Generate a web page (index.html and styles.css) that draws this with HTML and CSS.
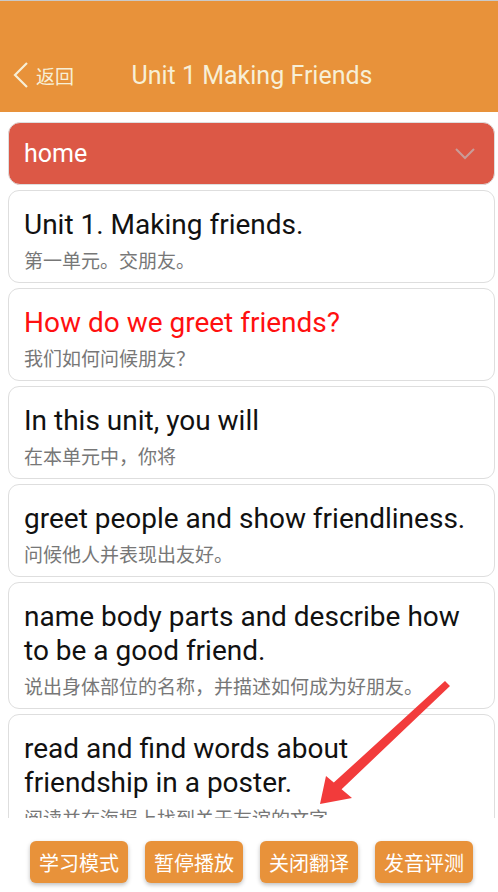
FILE: index.html
```html
<!DOCTYPE html>
<html lang="zh-CN">
  <head>
    <meta charset="UTF-8" />
    <meta name="viewport" content="width=device-width, initial-scale=1.0" />
    <title>Unit 1 Making Friends</title>
    <link rel="stylesheet" href="styles.css">
  </head>
  <body>
    <header class="topbar">
      <div class="nav">
        <a class="back" href="#">
          <svg width="16" height="28" viewBox="0 0 16 28">
            <path d="M14 2 L2 14 L14 26" fill="none" stroke="#f7efd6" stroke-width="2.2" />
          </svg>
          <span>返回</span>
        </a>
        <h1 class="title">Unit 1 Making Friends</h1>
        <span></span>
      </div>
    </header>

    <main class="list">
      <div class="picker">
        <span>home</span>
        <svg width="20" height="12" viewBox="0 0 20 12">
          <path d="M1 1 L10 10 L19 1" fill="none" stroke="#c99c98" stroke-width="2" />
        </svg>
      </div>

      <div class="card">
        <p class="en">Unit 1. Making friends.</p>
        <p class="cn">第一单元。交朋友。</p>
      </div>
      <div class="card">
        <p class="en red">How do we greet friends?</p>
        <p class="cn">我们如何问候朋友？</p>
      </div>
      <div class="card">
        <p class="en">In this unit, you will</p>
        <p class="cn">在本单元中，你将</p>
      </div>
      <div class="card">
        <p class="en">greet people and show friendliness.</p>
        <p class="cn">问候他人并表现出友好。</p>
      </div>
      <div class="card">
        <p class="en">name body parts and describe how to be a good friend.</p>
        <p class="cn">说出身体部位的名称，并描述如何成为好朋友。</p>
      </div>
      <div class="card">
        <p class="en">read and find words about friendship in a poster.</p>
        <p class="cn">阅读并在海报上找到关于友谊的文字。</p>
      </div>
    </main>

    <footer class="actions">
      <button>学习模式</button>
      <button>暂停播放</button>
      <button>关闭翻译</button>
      <button>发音评测</button>
    </footer>

    <!-- annotation arrow over the screenshot -->
    <svg class="pointer" width="498" height="892" viewBox="0 0 498 892">
      <polygon points="445,681 450,686 341.6,789.2 352,798 320,804 326,776 333.8,782.6" fill="#f23b3b" />
    </svg>
  </body>
</html>
```

FILE: styles.css
```css
:root {
  --orange: #e8923a;
  --red: #dc5846;
  --line: #dedede;
  --cream: #f7efd6;
}

html,
body {
  height: 100%;
}

body {
  margin: 0;
  display: flex;
  flex-direction: column;
  background: #fff;
  font-family: Roboto, "Noto Sans CJK SC", sans-serif;
  overflow: hidden;
}

.topbar {
  background: var(--orange);
  border-top: 1px solid #c9c9c9;
  padding: 49px 0 12px;
}

.nav {
  height: 50px;
  display: grid;
  grid-template-columns: 1fr auto 1fr;
  align-items: center;
  padding-left: 6px;
}

.back {
  display: flex;
  align-items: center;
  gap: 7px;
  padding-left: 7px;
  color: var(--cream);
  text-decoration: none;
  font-size: 19px;
}

.title {
  margin: 0;
  color: var(--cream);
  font-size: 25px;
  font-weight: 400;
}

.list {
  flex: 1;
  overflow: hidden;
  padding: 10px 3px 0 8px;
  display: flex;
  flex-direction: column;
  gap: 5px;
}

.picker {
  flex-shrink: 0;
  height: 61px;
  display: flex;
  align-items: center;
  justify-content: space-between;
  padding: 0 19px 0 15px;
  background: var(--red);
  border: 1px solid var(--line);
  border-radius: 12px;
  color: #fff;
  font-size: 25px;
}

.card {
  flex-shrink: 0;
  border: 1px solid var(--line);
  border-radius: 11px;
  padding: 17px 20px 7px 15px;
}

.card p {
  margin: 0;
}

.en {
  font-size: 28px;
  line-height: 34px;
  color: #111;
}

.en.red {
  color: #ff1010;
}

.cn {
  margin-top: 7px !important;
  font-size: 19px;
  line-height: 26px;
  color: #777;
}

.actions {
  flex-shrink: 0;
  height: 74px;
  box-sizing: border-box;
  padding: 23px 0 0 5px;
  display: flex;
  justify-content: center;
  gap: 17px;
  background: #fff;
}

.actions button {
  width: 98px;
  height: 42px;
  border: 0;
  border-radius: 6px;
  background: var(--orange);
  color: #fff;
  font-family: Roboto, "Noto Sans CJK SC", sans-serif;
  font-size: 20px;
  box-shadow: 0 2px 4px rgba(0, 0, 0, 0.25);
  padding: 0;
}

.pointer {
  position: absolute;
  top: 0;
  left: 0;
  pointer-events: none;
}
```
